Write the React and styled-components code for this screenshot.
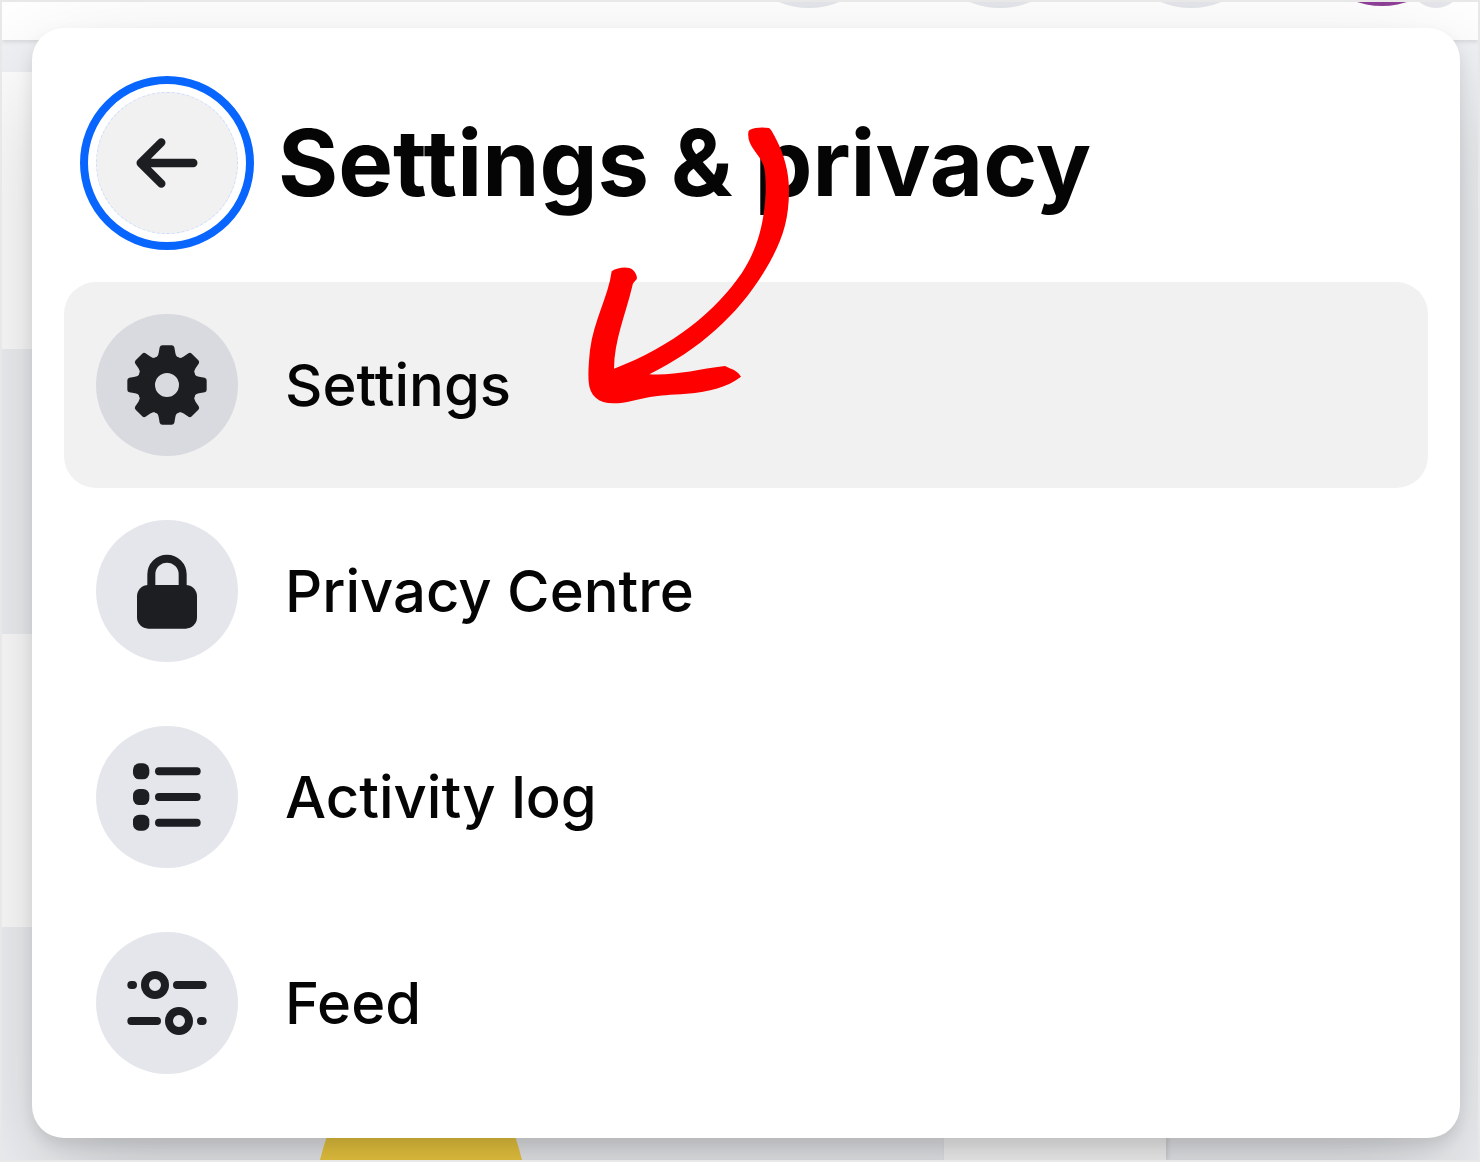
import React from 'react';
import styled, { createGlobalStyle } from 'styled-components';

const menuItems = [
    { label: 'Settings', icon: 'gear', active: true },
    { label: 'Privacy Centre', icon: 'lock' },
    { label: 'Activity log', icon: 'list' },
    { label: 'Feed', icon: 'sliders' },
];

const toothPath = 'M-36 -80 Q-27 -84 -25 -96 L-22 -113 Q-20 -119 -14 -119 H14 Q20 -119 22 -113 L25 -96 Q27 -84 36 -80 L0 -60 Z';

const GearIcon = () => (
    <Glyph viewBox="-120 -120 240 240" aria-hidden="true">
        <circle r="63" fill="none" stroke="currentColor" strokeWidth="54" />
        {[0, 45, 90, 135, 180, 225, 270, 315].map((angle) => (
            <path key={angle} d={toothPath} fill="currentColor" transform={`rotate(${angle})`} />
        ))}
    </Glyph>
);

const LockIcon = () => (
    <Glyph viewBox="-120 -120 240 240" aria-hidden="true">
        <rect x="-90" y="-18" width="180" height="131" rx="34" fill="currentColor" />
        <path d="M-47 -6 V-50 A47 47 0 0 1 47 -50 V-6" fill="none" stroke="currentColor" strokeWidth="24" />
    </Glyph>
);

const ListIcon = () => (
    <Glyph viewBox="-120 -120 240 240" aria-hidden="true">
        {[-77, 0, 77].map((y) => (
            <g key={y}>
                <rect x="-102" y={y - 24} width="49" height="48" rx="19" fill="currentColor" />
                <path d={`M-24 ${y} H89`} stroke="currentColor" strokeWidth="24" strokeLinecap="round" />
            </g>
        ))}
    </Glyph>
);

const SlidersIcon = () => (
    <Glyph viewBox="-120 -120 240 240" aria-hidden="true">
        <g fill="none" stroke="currentColor" strokeWidth="24" strokeLinecap="round">
            <path d="M-107 -54 H-102 M30 -54 H107" />
            <circle cx="-36" cy="-54" r="30" />
            <path d="M-107 54 H-30 M102 54 H107" />
            <circle cx="36" cy="54" r="30" />
        </g>
    </Glyph>
);

const BackIcon = () => (
    <Glyph viewBox="-120 -120 240 240" aria-hidden="true">
        <path
            d="M-17 -62 L-79 0 L-17 62 M-72 0 H79"
            fill="none"
            stroke="currentColor"
            strokeWidth="25"
            strokeLinecap="round"
            strokeLinejoin="round"
        />
    </Glyph>
);

const icons = {
    gear: GearIcon,
    lock: LockIcon,
    list: ListIcon,
    sliders: SlidersIcon,
};

const PageBehind = () => (
    <Backdrop aria-hidden="true">
        <TopBar>
            <RoundButton />
            <RoundButton />
            <RoundButton />
            <Avatar>
                <AvatarBadge />
            </Avatar>
        </TopBar>
        <Feed>
            <Post $height="277px" />
            <PostGap $height="285px" />
            <Post $height="293px" />
        </Feed>
        <BottomStrip>
            <YellowShape viewBox="0 0 202 24">
                <path d="M7 0 H195 Q199 12 202 24 H0 Q3 12 7 0 Z" fill="#f5d042" />
            </YellowShape>
            <Tile />
        </BottomStrip>
    </Backdrop>
);

const HandArrow = () => (
    <ArrowDrawing viewBox="0 0 720 930" aria-hidden="true">
        <path
            fill="#ff0000"
            d="M540 59 C555 52 577 51 597 54 C604 58 612 75 620 91 C642 135 657 185 657 240 C657 330 637 388 600 455
               C520 600 400 712 238 793 C320 797 380 778 465 768 L479 775 C496 781 505 788 513 800
               C470 832 420 845 350 851 C300 855 270 855 240 861 C200 868 170 880 130 880 C85 880 59 857 56 815
               C54 790 56 760 60 720 C72 630 115 560 125 484 C145 470 177 470 188 479 C197 487 203 500 200 508
               C193 515 188 520 187 528 C165 620 133 690 132 776 C310 710 440 600 515 490 C560 420 583 345 587 245
               C587 215 587 185 580 165 C567 130 530 107 535 68 C535 64 537 61 540 59 Z"
        />
    </ArrowDrawing>
);

export default function App() {
    return (
        <>
            <GlobalStyle />
            <Page>
                <PageBehind />
                <Card>
                    <Header>
                        <BackButton type="button" aria-label="Back">
                            <BackIcon />
                        </BackButton>
                        <Title>Settings &amp; privacy</Title>
                    </Header>
                    <Menu>
                        {menuItems.map(({ label, icon, active }) => {
                            const Icon = icons[icon];
                            return (
                                <li key={label}>
                                    <MenuLink href="#" $active={active}>
                                        <IconCircle $active={active}>
                                            <Icon />
                                        </IconCircle>
                                        <Label>{label}</Label>
                                    </MenuLink>
                                </li>
                            );
                        })}
                    </Menu>
                    <HandArrow />
                </Card>
            </Page>
        </>
    );
}

const GlobalStyle = createGlobalStyle`
    * {
        box-sizing: border-box;
    }

    body {
        margin: 0;
        font-family: Inter, "Liberation Sans", sans-serif;
    }
`;

const Page = styled.div`
    display: grid;
    overflow: hidden;
    border: 2px solid #e8e8e8;
    background: #f0f2f5;

    > * {
        grid-area: 1 / 1;
    }
`;

const Backdrop = styled.div`
    display: flex;
    flex-direction: column;
    min-width: 0;
`;

const TopBar = styled.div`
    display: flex;
    justify-content: flex-end;
    align-items: flex-start;
    gap: 31px;
    height: 38px;
    padding-right: 16px;
    overflow: hidden;
    background: #ffffff;
    box-shadow: 0 2px 4px rgba(0, 0, 0, 0.1);
`;

const RoundButton = styled.span`
    width: 160px;
    height: 160px;
    margin-top: -154px;
    border-radius: 50%;
    background: #e4e6eb;
`;

const Avatar = styled.span`
    position: relative;
    width: 160px;
    height: 160px;
    margin-top: -156px;
    border-radius: 50%;
    background: #8f3f97;
`;

const AvatarBadge = styled.span`
    position: absolute;
    right: 0;
    bottom: -2px;
    width: 52px;
    height: 52px;
    border-radius: 50%;
    background: #e4e6eb;
`;

const Feed = styled.div`
    flex: 1;
    padding-top: 32px;
`;

const Post = styled.div`
    width: 50%;
    height: ${({ $height }) => $height};
    background: #ffffff;
`;

const PostGap = styled.div`
    height: ${({ $height }) => $height};
`;

const BottomStrip = styled.div`
    display: flex;
    justify-content: space-between;
    height: 24px;
    padding: 0 312px 0 318px;
`;

const YellowShape = styled.svg`
    width: 202px;
    height: 24px;
`;

const Tile = styled.div`
    width: 222px;
    background: #ffffff;
    box-shadow: 2px 0 4px rgba(0, 0, 0, 0.1);
`;

const Card = styled.main`
    position: relative;
    margin: 26px 18px 22px 30px;
    padding: 32px;
    border-radius: 32px;
    background: #ffffff;
    box-shadow: 0 48px 112px rgba(0, 0, 0, 0.2), 0 8px 16px rgba(0, 0, 0, 0.1);
`;

const Header = styled.header`
    display: flex;
    align-items: center;
    gap: 40px;
    margin-bottom: 16px;
    padding: 32px;
`;

const BackButton = styled.button`
    display: flex;
    flex-shrink: 0;
    justify-content: center;
    align-items: center;
    width: 142px;
    height: 142px;
    padding: 0;
    border: 1px dashed #cbdcff;
    border-radius: 50%;
    outline: 8px solid #0866ff;
    outline-offset: 8px;
    background: #f1f1f1;
    color: #1c1e21;
    cursor: pointer;
`;

const Title = styled.h1`
    margin: 0;
    color: #050505;
    font-size: 92px;
    font-weight: 700;
    line-height: 112px;
`;

const Menu = styled.ul`
    margin: 0;
    padding: 0;
    list-style: none;
`;

const MenuLink = styled.a`
    display: flex;
    align-items: center;
    gap: 47px;
    padding: 32px;
    border-radius: 32px;
    background: ${({ $active }) => ($active ? '#f1f1f1' : 'transparent')};
    color: #050505;
    text-decoration: none;
`;

const IconCircle = styled.span`
    display: flex;
    flex-shrink: 0;
    justify-content: center;
    align-items: center;
    width: 142px;
    height: 142px;
    border-radius: 50%;
    background: ${({ $active }) => ($active ? '#d8dadf' : '#e4e6eb')};
    color: #1c1e21;
`;

const Glyph = styled.svg`
    display: block;
    width: 80px;
    height: 80px;
`;

const Label = styled.span`
    font-size: 58px;
    font-weight: 500;
    line-height: 80px;
`;

const ArrowDrawing = styled.svg`
    position: absolute;
    top: 82px;
    left: 538px;
    width: 240px;
    height: 310px;
    pointer-events: none;
`;
